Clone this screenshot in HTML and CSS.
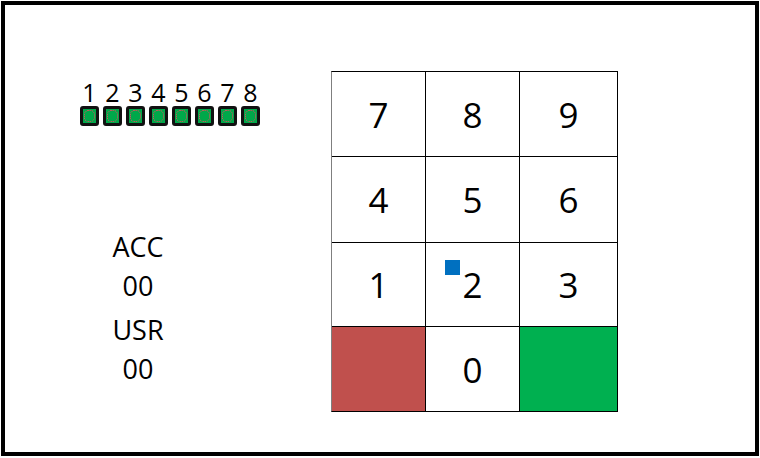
FILE: index.html
```html
<!DOCTYPE html>
<html lang="en">
<head>
    <meta charset="UTF-8">
    <title>Keypad</title>
    <link rel="stylesheet" href="styles.css">
</head>
<body>
    <div class="frame">
        <div class="side">
            <div class="leds">
                <div class="led-col"><span class="led-num">1</span><span class="led"></span></div>
                <div class="led-col"><span class="led-num">2</span><span class="led"></span></div>
                <div class="led-col"><span class="led-num">3</span><span class="led"></span></div>
                <div class="led-col"><span class="led-num">4</span><span class="led"></span></div>
                <div class="led-col"><span class="led-num">5</span><span class="led"></span></div>
                <div class="led-col"><span class="led-num">6</span><span class="led"></span></div>
                <div class="led-col"><span class="led-num">7</span><span class="led"></span></div>
                <div class="led-col"><span class="led-num">8</span><span class="led"></span></div>
            </div>

            <div class="counters">
                <div class="counter">
                    <div>ACC</div>
                    <div>00</div>
                </div>
                <div class="counter">
                    <div>USR</div>
                    <div>00</div>
                </div>
            </div>
        </div>

        <div class="keypad">
            <div class="key">7</div>
            <div class="key">8</div>
            <div class="key">9</div>
            <div class="key">4</div>
            <div class="key">5</div>
            <div class="key">6</div>
            <div class="key">1</div>
            <div class="key key-marked">2<span class="cursor"></span></div>
            <div class="key">3</div>
            <div class="key key-cancel"></div>
            <div class="key">0</div>
            <div class="key key-ok"></div>
        </div>
    </div>
</body>
</html>
```

FILE: styles.css
```css
* {
    margin: 0;
    padding: 0;
    box-sizing: border-box;
}

body {
    background: white;
    font-family: "Open Sans", "DejaVu Sans", sans-serif;
    color: #000;
}

.frame {
    display: flex;
    align-items: flex-start;
    width: 758px;
    height: 455px;
    margin: 1px 0 0 1px;
    border: 4px solid #000;
}

.side {
    width: 326px;
    padding: 75px 0 0 75px;
}

.leds {
    display: flex;
    gap: 4px;
}

.led-col {
    display: flex;
    flex-direction: column;
    align-items: center;
    width: 19px;
}

.led-num {
    font-size: 25px;
    line-height: 24px;
    margin-bottom: 2px;
}

.led {
    display: block;
    width: 19px;
    height: 20px;
    background: #00a84a;
    border: 3px solid #111;
    border-radius: 3px;
}

.led::after {
    content: '';
    display: block;
    margin: 1px;
    height: 10px;
    border: 1px dotted #ff4060;
    border-radius: 40%;
}

.counters {
    width: 116px;
    margin-top: 101px;
    text-align: center;
    font-size: 27px;
    line-height: 39px;
}

.counter + .counter {
    margin-top: 5px;
}

.keypad {
    display: grid;
    grid-template-columns: 93px 93px 97px;
    grid-template-rows: 84px 85px 83px 84px;
    gap: 1px;
    margin-top: 66px;
    background: #000;
    border: 1px solid #000;
    border-left-color: #7f7f7f;
}

.key {
    display: flex;
    align-items: center;
    justify-content: center;
    background: white;
    font-size: 35px;
}

.key-marked {
    position: relative;
}

.cursor {
    position: absolute;
    left: 19px;
    top: 17px;
    width: 15px;
    height: 15px;
    background: #0070c0;
}

.key-cancel {
    background: #c0504d;
}

.key-ok {
    background: #00b050;
}
```
